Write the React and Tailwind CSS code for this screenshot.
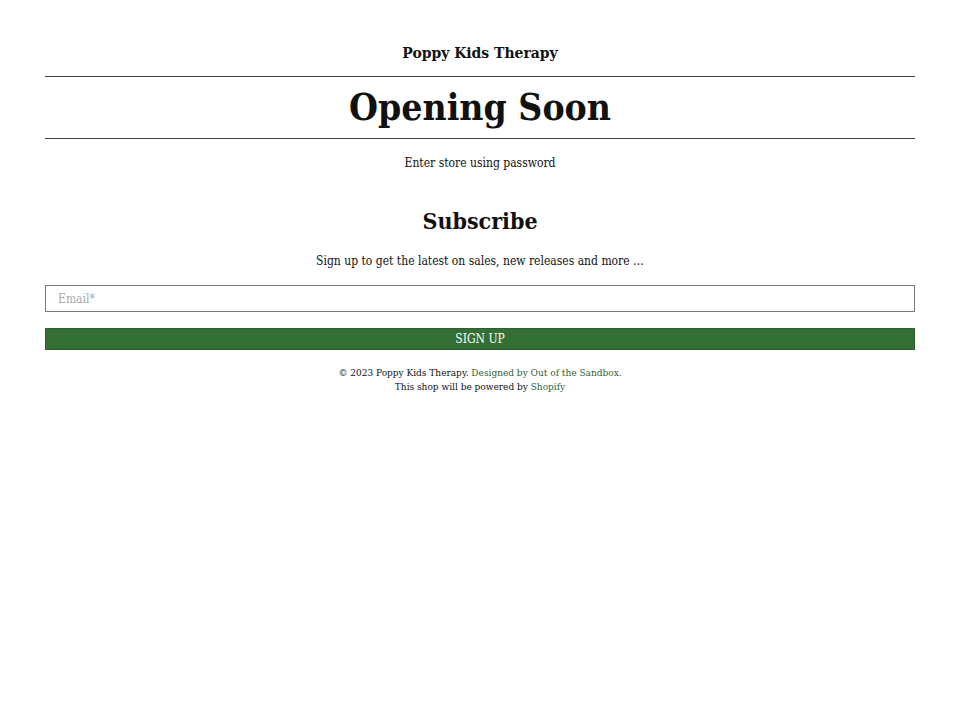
export default function App() {
  const serif = { fontFamily: '"DejaVu Serif Condensed", "DejaVu Serif", "Liberation Serif", serif', fontStretch: 'condensed' }
  return (
    <div className="min-h-[720px] bg-white text-[#111]" style={serif}>
      <div className="mx-[45px] pt-[44px]">
        <h2 className="text-center text-[15.5px] font-bold leading-[18px]">Poppy Kids Therapy</h2>
        <div className="mt-[14px] border-t border-[#444]" />
        <h1 className="py-[7px] text-center text-[37px] font-bold leading-[47px]">Opening Soon</h1>
        <div className="border-t border-[#444]" />
        <p className="mt-[16px] text-center text-[12px] leading-[16px]">Enter store using password</p>

        <h3 className="mt-[36px] text-center text-[23px] font-bold leading-[28px]">Subscribe</h3>
        <p className="mt-[18px] text-center text-[12px] leading-[16px]">
          Sign up to get the latest on sales, new releases and more …
        </p>

        <input
          type="email"
          placeholder="Email*"
          className="mt-[16px] block h-[27px] w-full border border-[#7a7a7a] px-[12px] text-[12px] placeholder:text-[#aaa] outline-none"
          style={serif}
        />
        <button
          className="mt-[16px] block h-[22px] w-full border border-[#2e5e30] bg-[#336f35] text-[12px] uppercase text-white"
          style={serif}
        >
          Sign up
        </button>

        <div className="mt-[16px] text-center text-[10px] leading-[14px]">
          <p>
            © 2023 Poppy Kids Therapy. <span className="text-[#2f5f3a]">Designed by Out of the Sandbox.</span>
          </p>
          <p>
            This shop will be powered by <span className="text-[#2f5f3a]">Shopify</span>
          </p>
        </div>
      </div>
    </div>
  )
}
